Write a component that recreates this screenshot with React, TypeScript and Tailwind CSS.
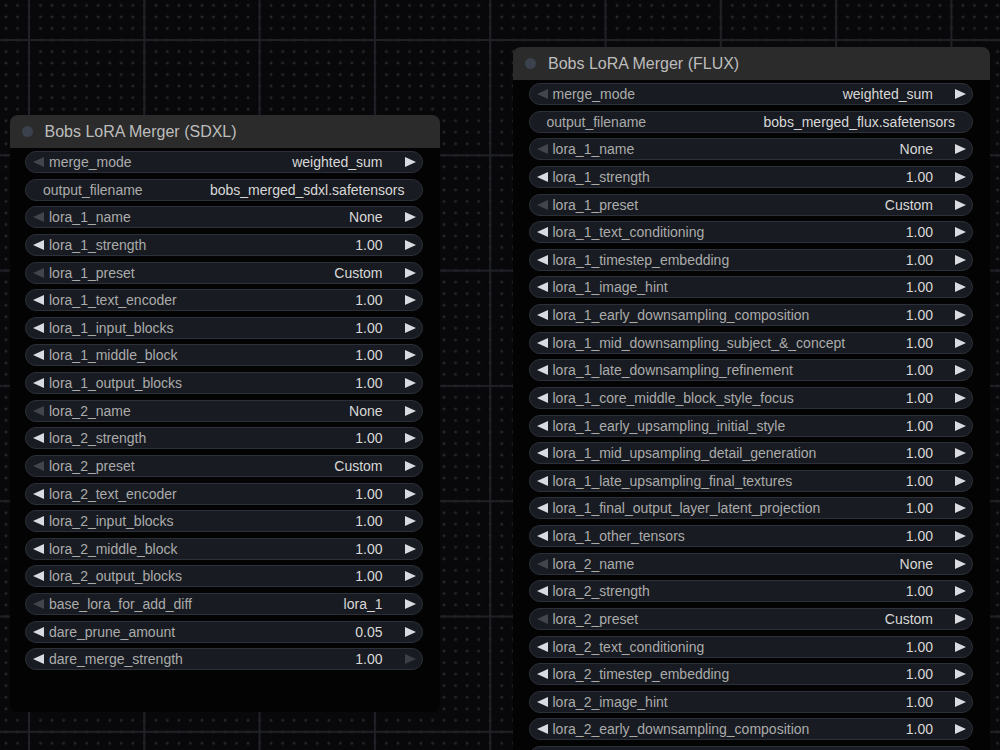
import React from "react";

type Kind = "combo" | "number" | "text" | "blank";
type W = { label: string; value: string; kind: Kind; leftDim?: boolean; rightDim?: boolean };

const LeftTri = ({ dim }: { dim?: boolean }) => (
  <svg width="11" height="10" viewBox="0 0 11 10" className="shrink-0">
    <polygon points="0,5 11,0 11,10" fill={dim ? "#41464e" : "#d9dbe0"} />
  </svg>
);
const RightTri = ({ dim }: { dim?: boolean }) => (
  <svg width="11" height="10" viewBox="0 0 11 10" className="shrink-0">
    <polygon points="11,5 0,0 0,10" fill={dim ? "#3a3f47" : "#d9dbe0"} />
  </svg>
);

function Widget({ w }: { w: W }) {
  if (w.kind === "blank") {
    return <div className="h-[22px] shrink-0 rounded-full bg-[#181b21] border border-[#2c3038]" />;
  }
  if (w.kind === "text") {
    return (
      <div className="h-[22px] shrink-0 rounded-full bg-[#181b21] border border-[#2c3038] flex items-center pl-[17px] pr-[17px] text-[14px] leading-none">
        <span className="text-[#ababab] whitespace-nowrap">{w.label}</span>
        <span className="flex-1" />
        <span className="text-[#d8d8d8] whitespace-nowrap">{w.value}</span>
      </div>
    );
  }
  const leftDim = w.leftDim ?? w.kind === "combo";
  return (
    <div className="h-[22px] shrink-0 rounded-full bg-[#181b21] border border-[#2c3038] flex items-center pl-[7px] pr-[6px] text-[14px] leading-none">
      <LeftTri dim={leftDim} />
      <span className="ml-[5px] text-[#ababab] whitespace-nowrap">{w.label}</span>
      <span className="flex-1" />
      <span className="text-[#d8d8d8] whitespace-nowrap">{w.value}</span>
      <span className="w-[22px] shrink-0" />
      <RightTri dim={w.rightDim} />
    </div>
  );
}

function Node({
  title,
  widgets,
  left,
  top,
  width,
  bodyHeight,
}: {
  title: string;
  widgets: W[];
  left: number;
  top: number;
  width: number;
  bodyHeight: number;
}) {
  return (
    <div className="absolute flex flex-col" style={{ left, top, width }}>
      <div className="h-[33px] rounded-t-[8px] bg-[#2b2b2b] flex items-center pl-[12px]">
        <div className="w-[11px] h-[11px] rounded-full bg-[#3b424d]" />
        <div className="ml-[12px] text-[16px] text-[#bdbdbd] whitespace-nowrap">{title}</div>
      </div>
      <div
        className="bg-[#030303] rounded-b-[8px] flex flex-col gap-[5.64px] pt-[3px] pl-[15.5px] pr-[17px] overflow-hidden"
        style={{ height: bodyHeight }}
      >
        {widgets.map((w, i) => (
          <Widget key={i} w={w} />
        ))}
      </div>
    </div>
  );
}

const n = (label: string, value = "1.00", rightDim?: boolean): W => ({ label, value, kind: "number", rightDim });
const c = (label: string, value: string): W => ({ label, value, kind: "combo" });

const sdxl: W[] = [
  c("merge_mode", "weighted_sum"),
  { label: "output_filename", value: "bobs_merged_sdxl.safetensors", kind: "text" },
  c("lora_1_name", "None"),
  n("lora_1_strength"),
  c("lora_1_preset", "Custom"),
  n("lora_1_text_encoder"),
  n("lora_1_input_blocks"),
  n("lora_1_middle_block"),
  n("lora_1_output_blocks"),
  c("lora_2_name", "None"),
  n("lora_2_strength"),
  c("lora_2_preset", "Custom"),
  n("lora_2_text_encoder"),
  n("lora_2_input_blocks"),
  n("lora_2_middle_block"),
  n("lora_2_output_blocks"),
  c("base_lora_for_add_diff", "lora_1"),
  n("dare_prune_amount", "0.05"),
  n("dare_merge_strength", "1.00", true),
];

const flux: W[] = [
  c("merge_mode", "weighted_sum"),
  { label: "output_filename", value: "bobs_merged_flux.safetensors", kind: "text" },
  c("lora_1_name", "None"),
  n("lora_1_strength"),
  c("lora_1_preset", "Custom"),
  n("lora_1_text_conditioning"),
  n("lora_1_timestep_embedding"),
  n("lora_1_image_hint"),
  n("lora_1_early_downsampling_composition"),
  n("lora_1_mid_downsampling_subject_&_concept"),
  n("lora_1_late_downsampling_refinement"),
  n("lora_1_core_middle_block_style_focus"),
  n("lora_1_early_upsampling_initial_style"),
  n("lora_1_mid_upsampling_detail_generation"),
  n("lora_1_late_upsampling_final_textures"),
  n("lora_1_final_output_layer_latent_projection"),
  n("lora_1_other_tensors"),
  c("lora_2_name", "None"),
  n("lora_2_strength"),
  c("lora_2_preset", "Custom"),
  n("lora_2_text_conditioning"),
  n("lora_2_timestep_embedding"),
  n("lora_2_image_hint"),
  n("lora_2_early_downsampling_composition"),
  { label: "", value: "", kind: "blank" },
];

function Grid() {
  const cell = 115.3;
  const d = cell / 10;
  return (
    <svg className="absolute inset-0" width="1000" height="750">
      <defs>
        <pattern id="dots" width={d} height={d} patternUnits="userSpaceOnUse" x={29 - d / 2} y={40 - d / 2}>
          <rect x={d / 2 - 1.5} y={d / 2 - 0.5} width="3" height="1" fill="#2f3034" />
          <rect x={d / 2 - 0.5} y={d / 2 - 1.5} width="1" height="3" fill="#2f3034" />
        </pattern>
        <pattern id="lines" width={cell} height={cell} patternUnits="userSpaceOnUse" x={28} y={39}>
          <rect x="0" y="0" width="2" height={cell} fill="#1f2126" />
          <rect x="0" y="0" width={cell} height="2" fill="#1f2126" />
        </pattern>
      </defs>
      <rect width="1000" height="750" fill="url(#dots)" />
      <rect width="1000" height="750" fill="url(#lines)" />
    </svg>
  );
}

export default function App() {
  return (
    <div className="relative w-[1000px] h-[750px] overflow-hidden bg-[#08080a] font-['Liberation_Sans',Arial,sans-serif]">
      <Grid />
      <Node title="Bobs LoRA Merger (SDXL)" widgets={sdxl} left={9.5} top={115} width={430} bodyHeight={564} />
      <Node title="Bobs LoRA Merger (FLUX)" widgets={flux} left={513} top={47} width={477} bodyHeight={720} />
    </div>
  );
}
